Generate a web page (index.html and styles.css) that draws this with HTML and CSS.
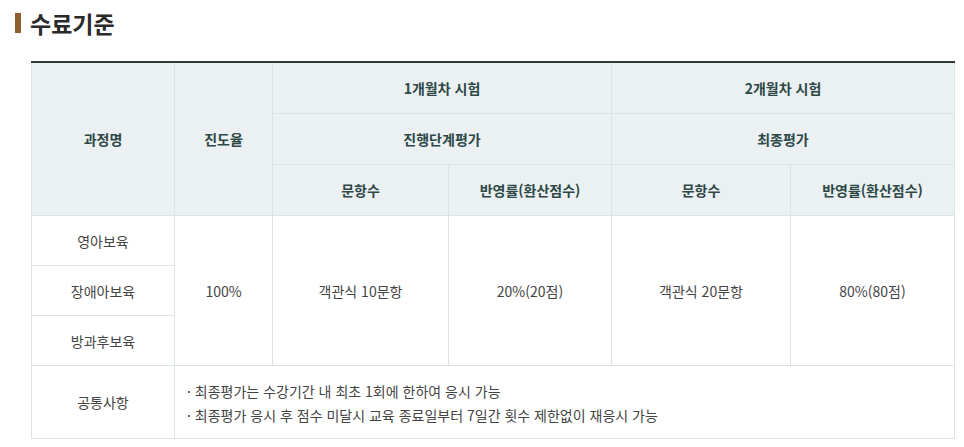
FILE: index.html
```html
<!DOCTYPE html>
<html lang="ko">
<head>
    <meta charset="UTF-8">
    <title>수료기준</title>
    <link rel="stylesheet" href="styles.css">
</head>
<body>
    <div class="section">
        <h2 class="section-title">수료기준</h2>

        <table class="criteria">
            <colgroup>
                <col class="c-course">
                <col class="c-progress">
                <col class="c-count1">
                <col class="c-rate1">
                <col class="c-count2">
                <col class="c-rate2">
            </colgroup>
            <thead>
                <tr>
                    <th rowspan="3">과정명</th>
                    <th rowspan="3">진도율</th>
                    <th colspan="2">1개월차 시험</th>
                    <th colspan="2">2개월차 시험</th>
                </tr>
                <tr>
                    <th colspan="2">진행단계평가</th>
                    <th colspan="2">최종평가</th>
                </tr>
                <tr>
                    <th>문항수</th>
                    <th>반영률(환산점수)</th>
                    <th>문항수</th>
                    <th>반영률(환산점수)</th>
                </tr>
            </thead>
            <tbody>
                <tr>
                    <td>영아보육</td>
                    <td rowspan="3">100%</td>
                    <td rowspan="3">객관식 10문항</td>
                    <td rowspan="3">20%(20점)</td>
                    <td rowspan="3">객관식 20문항</td>
                    <td rowspan="3">80%(80점)</td>
                </tr>
                <tr>
                    <td>장애아보육</td>
                </tr>
                <tr>
                    <td>방과후보육</td>
                </tr>
                <tr class="common">
                    <td>공통사항</td>
                    <td colspan="5" class="notes">
                        <p>· 최종평가는 수강기간 내 최초 1회에 한하여 응시 가능</p>
                        <p>· 최종평가 응시 후 점수 미달시 교육 종료일부터 7일간 횟수 제한없이 재응시 가능</p>
                    </td>
                </tr>
            </tbody>
        </table>
    </div>
</body>
</html>
```

FILE: styles.css
```css
body {
    margin: 0;
    background: #fff;
    font-family: "Noto Sans CJK KR", "Noto Sans", sans-serif;
    color: #444;
}
.section {
    padding: 10px 10px 0 15px;
}
.section-title {
    display: flex;
    align-items: center;
    gap: 9px;
    margin: 0 0 25px;
    height: 26px;
    font-size: 23px;
    font-weight: 700;
    color: #2a2a2a;
}
.section-title::before {
    content: '';
    width: 6px;
    height: 20px;
    background: #8f5f2e;
}

table.criteria {
    margin-left: 16px;
    width: 923px;
    table-layout: fixed;
    border-collapse: collapse;
    border-top: 2px solid #2f3b3b;
    font-size: 14px;
}
col.c-course { width: 143px; }
col.c-progress { width: 98px; }
col.c-count1 { width: 176px; }
col.c-rate1 { width: 163px; }
col.c-count2 { width: 179px; }
col.c-rate2 { width: 164px; }

.criteria th,
.criteria td {
    border: 1px solid #dbe3e5;
    text-align: center;
    vertical-align: middle;
    padding: 0;
}
.criteria tr:first-child th {
    border-top: 0;
}
.criteria th {
    background: #ebf0f2;
    color: #2d4846;
    font-weight: 700;
    height: 50px;
}
.criteria td {
    height: 49px;
    color: #444;
}
.criteria tr.common td {
    height: 71px;
}
.criteria td.notes {
    text-align: left;
    padding-left: 12px;
    padding-top: 1px;
}
.notes p {
    margin: 0;
    line-height: 24px;
}
```
